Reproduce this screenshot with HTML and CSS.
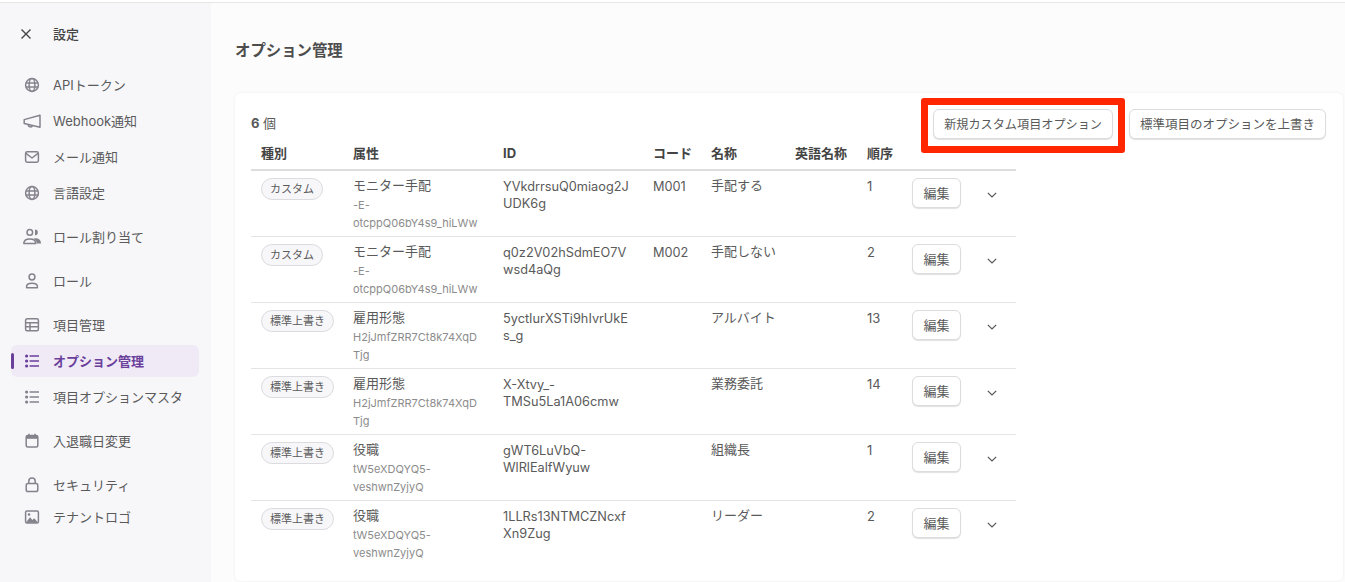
FILE: index.html
```html
<!DOCTYPE html>
<html lang="ja">
<head>
<meta charset="utf-8">
<title>オプション管理</title>
<link rel="stylesheet" href="styles.css">
</head>
<body>
<svg class="defs" width="0" height="0" aria-hidden="true">
  <symbol id="i-globe" viewBox="0 0 18 18"><g fill="none" stroke="currentColor" stroke-width="1.5"><circle cx="9" cy="9" r="6.4"/><ellipse cx="9" cy="9" rx="2.9" ry="6.4"/><path d="M2.800 7h12.400M2.800 11h12.400"/></g></symbol>
  <symbol id="i-mega" viewBox="0 0 18 18"><g fill="none" stroke="currentColor" stroke-width="1.5" stroke-linejoin="round"><path d="M17 3.200v12L1.200 11.400V7.600z"/><path d="M5.400 12.300a2.100 2.100 0 0 0 4.100 1"/></g></symbol>
  <symbol id="i-mail" viewBox="0 0 18 18"><g fill="none" stroke="currentColor" stroke-width="1.5" stroke-linejoin="round"><rect x="2.600" y="3.800" width="12.800" height="10.400" rx="1.600"/><path d="M3 5.400 9 10l6-4.600"/></g></symbol>
  <symbol id="i-users" viewBox="0 0 18 18"><g fill="none" stroke="currentColor" stroke-width="1.5"><circle cx="6.800" cy="4.400" r="2.800"/><path d="M.8 15.600c0-3 2.400-4.600 6-4.600s6 1.600 6 4.600z" stroke-linejoin="round"/></g><path fill="currentColor" d="M12 1.600a2.800 2.800 0 0 1 0 5.600zM10.600 10.400c4.200-.6 7.400.9 7.400 5.200h-4.200c0-2-1.200-3.800-3.200-5.200z"/></symbol>
  <symbol id="i-user" viewBox="0 0 18 18"><g fill="none" stroke="currentColor" stroke-width="1.5" stroke-linejoin="round"><circle cx="9" cy="5" r="2.900"/><path d="M3.600 15.800v-1.300c0-2 2.400-3.300 5.400-3.300s5.400 1.300 5.400 3.300v1.300z"/></g></symbol>
  <symbol id="i-table" viewBox="0 0 18 18"><g fill="none" stroke="currentColor" stroke-width="1.500"><rect x="2.600" y="2.800" width="12.800" height="12" rx="1.500"/><path d="M2.600 6.800h12.800M2.600 10.800h12.800M7 6.800v8"/></g></symbol>
  <symbol id="i-list" viewBox="0 0 18 18"><g fill="currentColor"><circle cx="3.600" cy="4" r="1.600"/><circle cx="3.600" cy="9" r="1.600"/><circle cx="3.600" cy="14" r="1.600"/></g><path fill="none" stroke="currentColor" stroke-width="1.500" d="M6.600 4H16M6.600 9H16M6.600 14H16"/></symbol>
  <symbol id="i-cal" viewBox="0 0 18 18"><rect x="3.200" y="3.500" width="11.600" height="11.500" rx="1.500" fill="none" stroke="currentColor" stroke-width="1.500"/><path fill="currentColor" d="M3.200 4h11.600v2.800H3.200z"/><path stroke="currentColor" stroke-width="1.500" d="M6 1.800v2.500M12 1.800v2.500"/></symbol>
  <symbol id="i-lock" viewBox="0 0 18 18"><g fill="none" stroke="currentColor" stroke-width="1.500"><rect x="3.200" y="7.600" width="11.600" height="8" rx="1.800"/><path d="M5.800 7.600V5.200a3.200 3.200 0 0 1 6.400 0v2.400"/></g></symbol>
  <symbol id="i-image" viewBox="0 0 18 18"><rect x="2.600" y="3" width="12.800" height="12" rx="1.300" fill="none" stroke="currentColor" stroke-width="1.500"/><circle cx="6" cy="6.500" r="1.300" fill="currentColor"/><path fill="currentColor" d="M2.800 14.800 7 9.200l2.400 2.800 1.800-1.800 4 4.600z"/></symbol>
</svg>
<div class="topbar"></div>
<div class="layout">
  <aside class="sidebar">
    <div class="side-head">
      <svg class="close" viewBox="0 0 12 12" width="12" height="12"><path d="M1.500 1.500l9 9M10.500 1.500l-9 9" stroke="currentColor" stroke-width="1.400" fill="none"/></svg>
      <span class="side-title">設定</span>
    </div>
    <nav class="nav">
      <div class="group">
        <a class="item"><svg class="ico"><use href="#i-globe"/></svg>APIトークン</a>
        <a class="item"><svg class="ico"><use href="#i-mega"/></svg>Webhook通知</a>
        <a class="item"><svg class="ico"><use href="#i-mail"/></svg>メール通知</a>
        <a class="item"><svg class="ico"><use href="#i-globe"/></svg>言語設定</a>
      </div>
      <div class="group"><a class="item"><svg class="ico"><use href="#i-users"/></svg>ロール割り当て</a></div>
      <div class="group"><a class="item"><svg class="ico"><use href="#i-user"/></svg>ロール</a></div>
      <div class="group">
        <a class="item"><svg class="ico"><use href="#i-table"/></svg>項目管理</a>
        <a class="item active"><svg class="ico"><use href="#i-list"/></svg>オプション管理</a>
        <a class="item"><svg class="ico"><use href="#i-list"/></svg>項目オプションマスタ</a>
      </div>
      <div class="group"><a class="item"><svg class="ico"><use href="#i-cal"/></svg>入退職日変更</a></div>
      <div class="group last">
        <a class="item short"><svg class="ico"><use href="#i-lock"/></svg>セキュリティ</a>
        <a class="item short"><svg class="ico"><use href="#i-image"/></svg>テナントロゴ</a>
      </div>
    </nav>
  </aside>
  <main class="main">
    <h1 class="title">オプション管理</h1>
    <section class="card">
      <div class="toolbar">
        <div class="count"><b>6</b> 個</div>
        <div class="actions">
          <span class="highlight">
            <button class="btn wide">新規カスタム項目オプション</button>
          </span>
          <button class="btn wide roomy">標準項目のオプションを上書き</button>
        </div>
      </div>
      <table class="tbl">
        <colgroup>
          <col class="c1"><col class="c2"><col class="c3"><col class="c4"><col class="c5"><col class="c6"><col class="c7"><col class="c8"><col class="c9">
        </colgroup>
        <thead>
          <tr><th>種別</th><th>属性</th><th>ID</th><th>コード</th><th>名称</th><th>英語名称</th><th>順序</th><th></th><th></th></tr>
        </thead>
        <tbody>
          <tr><td><span class="tag">カスタム</span></td><td class="attr">モニター手配<div class="sub">-E-otcppQ06bY4s9_hiLWw</div></td><td class="id">YVkdrrsuQ0miaog2JUDK6g</td><td class="id">M001</td><td class="name">手配する</td><td></td><td>1</td><td class="act"><button class="btn edit">編集</button></td><td class="chev"><svg viewBox="0 0 10 6" width="10" height="6"><path d="M.8.8 5 5 9.200.8" fill="none" stroke="currentColor" stroke-width="1.200"/></svg></td></tr>
          <tr><td><span class="tag">カスタム</span></td><td class="attr">モニター手配<div class="sub">-E-otcppQ06bY4s9_hiLWw</div></td><td class="id">q0z2V02hSdmEO7Vwsd4aQg</td><td class="id">M002</td><td class="name">手配しない</td><td></td><td>2</td><td class="act"><button class="btn edit">編集</button></td><td class="chev"><svg viewBox="0 0 10 6" width="10" height="6"><path d="M.8.8 5 5 9.200.8" fill="none" stroke="currentColor" stroke-width="1.200"/></svg></td></tr>
          <tr><td><span class="tag">標準上書き</span></td><td class="attr">雇用形態<div class="sub">H2jJmfZRR7Ct8k74XqDTjg</div></td><td class="id">5yctIurXSTi9hIvrUkEs_g</td><td></td><td class="name">アルバイト</td><td></td><td>13</td><td class="act"><button class="btn edit">編集</button></td><td class="chev"><svg viewBox="0 0 10 6" width="10" height="6"><path d="M.8.8 5 5 9.200.8" fill="none" stroke="currentColor" stroke-width="1.200"/></svg></td></tr>
          <tr><td><span class="tag">標準上書き</span></td><td class="attr">雇用形態<div class="sub">H2jJmfZRR7Ct8k74XqDTjg</div></td><td class="id">X-Xtvy_-TMSu5La1A06cmw</td><td></td><td class="name">業務委託</td><td></td><td>14</td><td class="act"><button class="btn edit">編集</button></td><td class="chev"><svg viewBox="0 0 10 6" width="10" height="6"><path d="M.8.8 5 5 9.200.8" fill="none" stroke="currentColor" stroke-width="1.200"/></svg></td></tr>
          <tr><td><span class="tag">標準上書き</span></td><td class="attr">役職<div class="sub">tW5eXDQYQ5-veshwnZyjyQ</div></td><td class="id">gWT6LuVbQ-WlRlEalfWyuw</td><td></td><td class="name">組織長</td><td></td><td>1</td><td class="act"><button class="btn edit">編集</button></td><td class="chev"><svg viewBox="0 0 10 6" width="10" height="6"><path d="M.8.8 5 5 9.200.8" fill="none" stroke="currentColor" stroke-width="1.200"/></svg></td></tr>
          <tr><td><span class="tag">標準上書き</span></td><td class="attr">役職<div class="sub">tW5eXDQYQ5-veshwnZyjyQ</div></td><td class="id">1LLRs13NTMCZNcxfXn9Zug</td><td></td><td class="name">リーダー</td><td></td><td>2</td><td class="act"><button class="btn edit">編集</button></td><td class="chev"><svg viewBox="0 0 10 6" width="10" height="6"><path d="M.8.8 5 5 9.200.8" fill="none" stroke="currentColor" stroke-width="1.200"/></svg></td></tr>
        </tbody>
      </table>
    </section>
  </main>
</div>
</body>
</html>
```
FILE: styles.css
```css
* { box-sizing: border-box; }
html, body { margin: 0; height: 100%; overflow: hidden; }
body {
  font-family: Inter, "Noto Sans CJK JP", sans-serif;
  font-size: 13px;
  line-height: 17px;
  color: #5a5a5a;
  background: #fcfcfc;
  display: flex;
  flex-direction: column;
}
.defs { position: absolute; }
.topbar { height: 3px; background: #fff; border-bottom: 1px solid #e6e6e6; flex: none; }
.layout { flex: 1; display: flex; min-height: 0; }

.sidebar { width: 211px; flex: none; background: #f7f7fa; }
.side-head { height: 62px; display: flex; align-items: center; padding-left: 20px; gap: 21px; color: #444; }
.side-title { font-weight: 500; }
.close { flex: none; }
.nav { padding: 2px 12px 0 11px; display: flex; flex-direction: column; gap: 8px; }
.group { display: flex; flex-direction: column; }
.group.last { margin-top: 2px; }
.item { height: 36px; display: flex; align-items: center; gap: 12px; padding-left: 12px; position: relative; border-radius: 6px; }
.item.short { height: 32px; }
.ico { width: 18px; height: 18px; color: #85828c; flex: none; }
.item.active { height: 32px; margin: 2px 0; background: #f0eaf6; color: #6a3f9c; font-weight: 700; }
.item.active .ico { color: #6a3f9c; }
.item.active::before { content: ""; position: absolute; left: 0; top: 8px; width: 3px; height: 16px; background: #6a3f9c; border-radius: 2px; }

.main { flex: 1; padding: 0 2px 0 24px; min-width: 0; display: flex; flex-direction: column; }
.title { margin: 0; height: 90px; padding-top: 36px; font-size: 15.400px; line-height: 24px; font-weight: 700; color: #4d4d4d; }
.card { flex: 1; margin-bottom: 1px; background: #fff; border-radius: 6px; box-shadow: 0 0 3px rgba(0, 0, 0, .07); padding: 16px 17px 0 16px; }
.toolbar { display: flex; justify-content: space-between; align-items: center; height: 30px; }
.count { margin-top: -2px; }
.count b { font-weight: 700; }
.actions { display: flex; gap: 16px; }
.highlight { position: relative; display: block; }
.highlight::after { content: ""; position: absolute; left: -12px; right: -12px; top: -11px; bottom: -14px; border: 7px solid #ff2600; border-radius: 3px; pointer-events: none; }
.btn { font: inherit; color: #5a5a5a; background: #fff; border: 1px solid #dcdcdc; border-radius: 6px; box-shadow: 0 1px 1px rgba(0, 0, 0, .12); height: 30px; padding: 0; cursor: pointer; }
.btn.wide { font-size: 12.150px; padding: 0 10px; }
.btn.wide.roomy { font-size: 12.500px; }
.btn.edit { width: 49px; }

.tbl { width: 765px; table-layout: fixed; border-collapse: separate; border-spacing: 0; }
.c1 { width: 92px; } .c2 { width: 150px; } .c3 { width: 150px; } .c4 { width: 58px; } .c5 { width: 84px; }
.c6 { width: 72px; } .c7 { width: 45px; } .c8 { width: 69px; } .c9 { width: 45px; }
th { height: 32px; padding: 6px 0 0 10px; text-align: left; font-weight: 700; color: #444; border-bottom: 2px solid #ddd; vertical-align: top; white-space: nowrap; }
td { height: 66px; padding: 7px 10px 0; vertical-align: top; border-bottom: 1px solid #e4e4e4; overflow-wrap: anywhere; }
tbody tr:last-child td { border-bottom: 0; }
.id { font-size: 12.750px; }
.attr { padding-top: 6px; }
.name { padding: 6px 0 0 10px; white-space: nowrap; }
.sub { font-size: 11px; line-height: 18px; color: #8c8c8c; margin-top: 2px; }
.tag { display: inline-flex; align-items: center; height: 22px; padding: 0 8px; font-size: 11px; border: 1px solid #dcdce0; border-radius: 11px; background: #f7f7fa; white-space: nowrap; }
.act { padding-right: 0; }
.chev { padding: 21px 0 0 16px; color: #555; }
.chev svg { display: block; }
```
